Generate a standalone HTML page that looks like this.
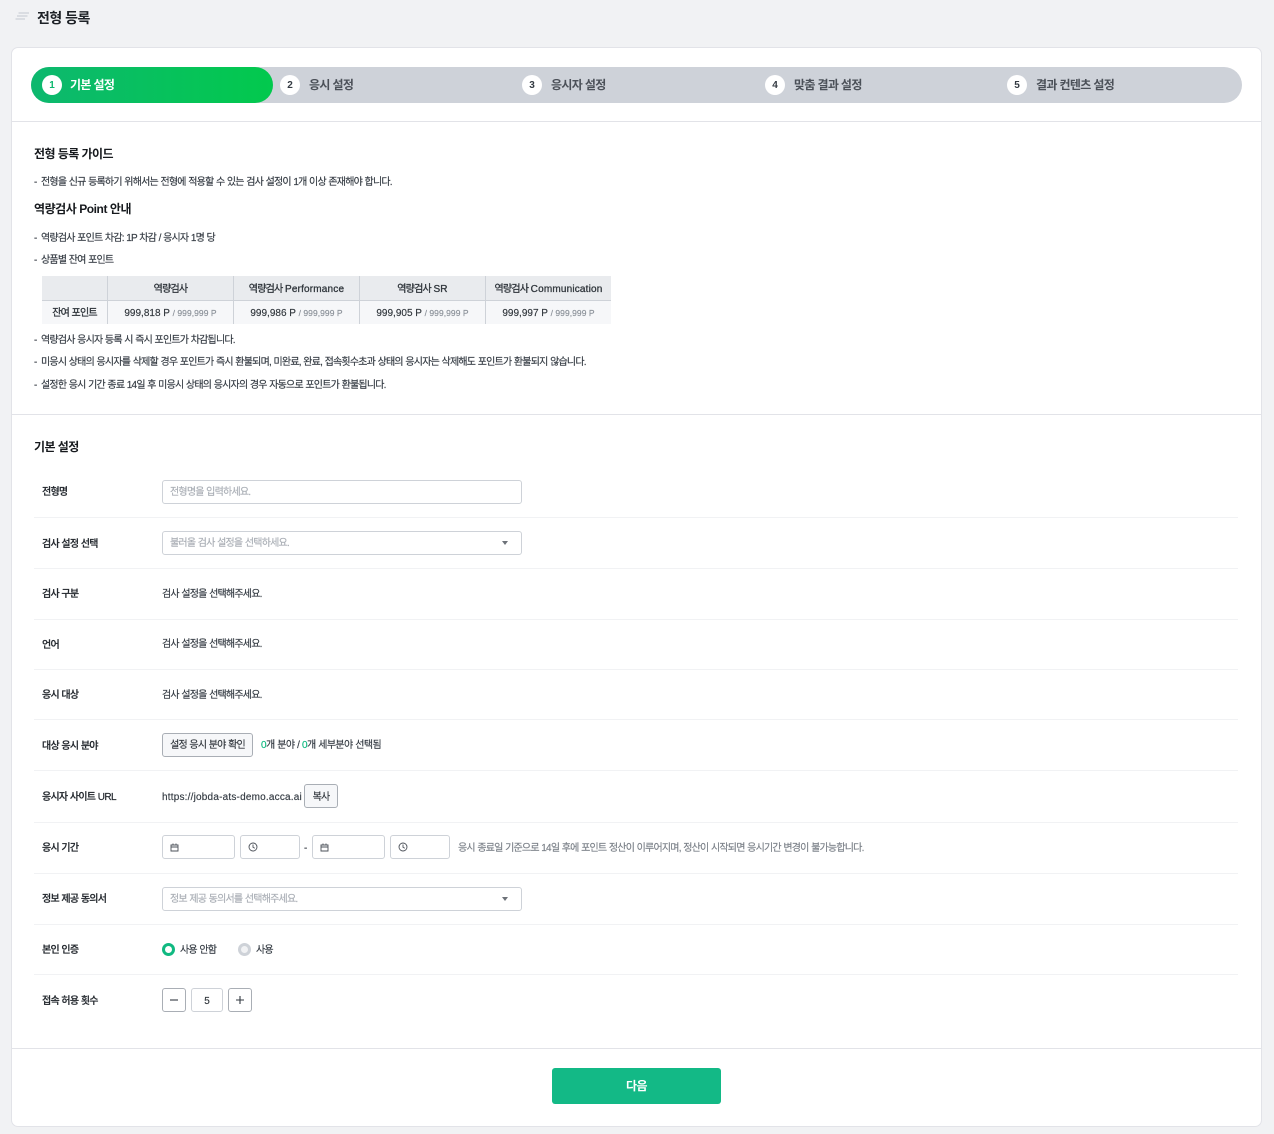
<!DOCTYPE html>
<html lang="ko"><head><meta charset="utf-8"><title>전형 등록</title>
<style>
*{box-sizing:border-box}
html,body{margin:0;padding:0}
body{width:1274px;height:1134px;background:#f1f2f4;position:relative;overflow:hidden;font-family:"Liberation Sans","Noto Sans CJK KR",sans-serif;color:#333a42}
.t{position:absolute;white-space:nowrap;font-size:10px;line-height:14px;letter-spacing:-.78px;word-spacing:.5px;margin-top:1px;-webkit-text-stroke:.15px currentColor}
.b{font-weight:700}
.bx{position:absolute;background:#fff;border:1px solid #ced2d8;border-radius:3px}
.ln{position:absolute;height:1px;left:34px;width:1204px;background:#f1f2f4}
.hl{position:absolute;height:1px;left:12px;width:1249px;background:#e2e3e8}
.num{position:absolute;top:75px;width:20px;height:20px;border-radius:50%;background:#fff;text-align:center;font-size:10px;font-weight:700;line-height:21px;color:#333a42}
.st{position:absolute;top:77px;font-size:12px;font-weight:700;line-height:16px;color:#4b5058;white-space:nowrap;letter-spacing:-.65px}
.h{position:absolute;white-space:nowrap;font-size:12px;line-height:16px;font-weight:700;color:#16191d;letter-spacing:-.55px}
.lb{position:absolute;left:42px;white-space:nowrap;font-size:10px;line-height:14px;font-weight:500;color:#23282e;letter-spacing:-.75px;word-spacing:.5px;margin-top:1px;-webkit-text-stroke:.2px currentColor}
.ph{color:#a9aeb5}
.arr{position:absolute;width:0;height:0;border-left:3.5px solid transparent;border-right:3.5px solid transparent;border-top:4px solid #6d7279}
.cell{position:absolute;text-align:center;white-space:nowrap;font-size:10px;line-height:14px;color:#2f353b;margin-top:1px;-webkit-text-stroke:.15px currentColor}
.k{letter-spacing:-.78px;word-spacing:.5px}
.cb{-webkit-text-stroke:.3px currentColor;letter-spacing:.18px}
.g{color:#8a9098;font-size:8.5px;letter-spacing:.05px}
svg{position:absolute;display:block}
</style></head><body>

<svg style="left:15px;top:10px" width="15" height="12" viewBox="0 0 15 12"><path d="M3.500 3H14M2 6H12.500M.5 9H10" stroke="#d3d6db" stroke-width="1.500" fill="none"/></svg>
<div class="t b" style="left:37px;top:8px;font-size:14px;line-height:18px;color:#1d2126;letter-spacing:-.5px;word-spacing:0;-webkit-text-stroke:0">전형 등록</div>

<div style="position:absolute;left:11px;top:47px;width:1251px;height:1080px;background:#fff;border:1px solid #e2e3e8;border-radius:7px"></div>

<div style="position:absolute;left:31px;top:67px;width:1211px;height:36px;border-radius:18px;background:#ced2d9"></div>
<div style="position:absolute;left:31px;top:67px;width:242px;height:36px;border-radius:18px;background:linear-gradient(90deg,#0db86f,#02c94d)"></div>
<div class="num" style="left:42px;color:#0db86f">1</div><div class="st" style="left:70px;color:#fff">기본 설정</div>
<div class="num" style="left:280px">2</div><div class="st" style="left:309px">응시 설정</div>
<div class="num" style="left:522px">3</div><div class="st" style="left:551px">응시자 설정</div>
<div class="num" style="left:765px">4</div><div class="st" style="left:794px">맞춤 결과 설정</div>
<div class="num" style="left:1007px">5</div><div class="st" style="left:1036px">결과 컨텐츠 설정</div>
<div class="hl" style="top:121px"></div>

<div class="h" style="left:34px;top:146px">전형 등록 가이드</div>
<div class="t" style="left:34px;top:175px">-</div><div class="t" style="left:41px;top:175px">전형을 신규 등록하기 위해서는 전형에 적용할 수 있는 검사 설정이 1개 이상 존재해야 합니다.</div>
<div class="h" style="left:34px;top:201px;letter-spacing:-.45px">역량검사 Point 안내</div>
<div class="t" style="left:34px;top:231px">-</div><div class="t" style="left:41px;top:231px">역량검사 포인트 차감: 1P 차감 / 응시자 1명 당</div>
<div class="t" style="left:34px;top:253px">-</div><div class="t" style="left:41px;top:253px">상품별 잔여 포인트</div>

<div style="position:absolute;left:42px;top:276px;width:569px;height:48px;background:#f6f7f9"></div>
<div style="position:absolute;left:42px;top:276px;width:569px;height:24px;background:#e9ebee"></div>
<div style="position:absolute;left:42px;top:300px;width:569px;height:1px;background:#ced2d8"></div>
<div style="position:absolute;left:107px;top:276px;width:1px;height:48px;background:#ced2d8"></div>
<div style="position:absolute;left:233px;top:276px;width:1px;height:48px;background:#ced2d8"></div>
<div style="position:absolute;left:359px;top:276px;width:1px;height:48px;background:#ced2d8"></div>
<div style="position:absolute;left:485px;top:276px;width:1px;height:48px;background:#ced2d8"></div>
<div class="cell cb" style="left:108px;width:125px;top:282px"><span class="k">역량검사</span></div>
<div class="cell cb" style="left:234px;width:125px;top:282px"><span class="k">역량검사 </span>Performance</div>
<div class="cell cb" style="left:360px;width:125px;top:282px"><span class="k">역량검사 </span>SR</div>
<div class="cell cb" style="left:486px;width:125px;top:282px"><span class="k">역량검사 </span>Communication</div>
<div class="cell cb" style="left:42px;width:65px;top:306px"><span class="k">잔여 포인트</span></div>
<div class="cell" style="left:108px;width:125px;top:305px">999,818 P <span class="g">/ 999,999 P</span></div>
<div class="cell" style="left:234px;width:125px;top:305px">999,986 P <span class="g">/ 999,999 P</span></div>
<div class="cell" style="left:360px;width:125px;top:305px">999,905 P <span class="g">/ 999,999 P</span></div>
<div class="cell" style="left:486px;width:125px;top:305px">999,997 P <span class="g">/ 999,999 P</span></div>

<div class="t" style="left:34px;top:333px">-</div><div class="t" style="left:41px;top:333px">역량검사 응시자 등록 시 즉시 포인트가 차감됩니다.</div>
<div class="t" style="left:34px;top:355px">-</div><div class="t" style="left:41px;top:355px">미응시 상태의 응시자를 삭제할 경우 포인트가 즉시 환불되며, 미완료, 완료, 접속횟수초과 상태의 응시자는 삭제해도 포인트가 환불되지 않습니다.</div>
<div class="t" style="left:34px;top:378px">-</div><div class="t" style="left:41px;top:378px">설정한 응시 기간 종료 14일 후 미응시 상태의 응시자의 경우 자동으로 포인트가 환불됩니다.</div>
<div class="hl" style="top:414px"></div>

<div class="h" style="left:34px;top:439px">기본 설정</div>

<div class="lb" style="top:485px">전형명</div>
<div class="bx" style="left:162px;top:480px;width:360px;height:24px"></div>
<div class="t ph" style="left:170px;top:485px">전형명을 입력하세요.</div>
<div class="ln" style="top:517px"></div>

<div class="lb" style="top:537px">검사 설정 선택</div>
<div class="bx" style="left:162px;top:531px;width:360px;height:24px"></div>
<div class="t ph" style="left:170px;top:536px">불러올 검사 설정을 선택하세요.</div>
<div class="arr" style="left:502px;top:541px"></div>
<div class="ln" style="top:568px"></div>

<div class="lb" style="top:587px">검사 구분</div>
<div class="t" style="left:162px;top:587px">검사 설정을 선택해주세요.</div>
<div class="ln" style="top:619px"></div>

<div class="lb" style="top:638px">언어</div>
<div class="t" style="left:162px;top:637px">검사 설정을 선택해주세요.</div>
<div class="ln" style="top:669px"></div>

<div class="lb" style="top:688px">응시 대상</div>
<div class="t" style="left:162px;top:688px">검사 설정을 선택해주세요.</div>
<div class="ln" style="top:719px"></div>

<div class="lb" style="top:739px">대상 응시 분야</div>
<div class="bx" style="left:162px;top:733px;width:91px;height:24px;background:#f6f7f9;border-color:#a9aeb5"></div>
<div class="cell k" style="left:162px;width:91px;top:738px">설정 응시 분야 확인</div>
<div class="t" style="left:261px;top:738px;letter-spacing:-.6px"><span style="color:#10b981">0</span>개 분야 / <span style="color:#10b981">0</span>개 세부분야 선택됨</div>
<div class="ln" style="top:770px"></div>

<div class="lb" style="top:790px">응시자 사이트 <span style="letter-spacing:-.6px">URL</span></div>
<div class="t" style="left:162px;top:790px;letter-spacing:.2px">https://jobda-ats-demo.acca.ai</div>
<div class="bx" style="left:304px;top:784px;width:34px;height:24px;background:#f6f7f9;border-color:#a9aeb5"></div>
<div class="cell k" style="left:304px;width:34px;top:790px">복사</div>
<div class="ln" style="top:822px"></div>

<div class="lb" style="top:841px">응시 기간</div>
<div class="bx" style="left:162px;top:835px;width:73px;height:24px"></div>
<svg style="left:170px;top:843px" width="9" height="9" viewBox="0 0 9 9"><path d="M1 2H8V8H1ZM1 4H8M3 .5V2M6 .5V2" fill="none" stroke="#4b5058" stroke-width=".9"/></svg>
<div class="bx" style="left:240px;top:835px;width:60px;height:24px"></div>
<svg style="left:248px;top:842px" width="10" height="10" viewBox="0 0 10 10"><circle cx="5" cy="5" r="4" fill="none" stroke="#4b5058" stroke-width=".9"/><path d="M5 2.500V5.200L6.800 6.300" fill="none" stroke="#4b5058" stroke-width=".9"/></svg>
<div class="t" style="left:304px;top:841px">-</div>
<div class="bx" style="left:312px;top:835px;width:73px;height:24px"></div>
<svg style="left:320px;top:843px" width="9" height="9" viewBox="0 0 9 9"><path d="M1 2H8V8H1ZM1 4H8M3 .5V2M6 .5V2" fill="none" stroke="#4b5058" stroke-width=".9"/></svg>
<div class="bx" style="left:390px;top:835px;width:60px;height:24px"></div>
<svg style="left:398px;top:842px" width="10" height="10" viewBox="0 0 10 10"><circle cx="5" cy="5" r="4" fill="none" stroke="#4b5058" stroke-width=".9"/><path d="M5 2.500V5.200L6.800 6.300" fill="none" stroke="#4b5058" stroke-width=".9"/></svg>
<div class="t" style="left:458px;top:841px;color:#7b8088">응시 종료일 기준으로 14일 후에 포인트 정산이 이루어지며, 정산이 시작되면 응시기간 변경이 불가능합니다.</div>
<div class="ln" style="top:873px"></div>

<div class="lb" style="top:892px">정보 제공 동의서</div>
<div class="bx" style="left:162px;top:887px;width:360px;height:24px"></div>
<div class="t ph" style="left:170px;top:892px">정보 제공 동의서를 선택해주세요.</div>
<div class="arr" style="left:502px;top:897px"></div>
<div class="ln" style="top:924px"></div>

<div class="lb" style="top:943px">본인 인증</div>
<div style="position:absolute;left:162px;top:943px;width:13px;height:13px;border-radius:50%;border:3.5px solid #10b981;background:#fff"></div>
<div class="t" style="left:180px;top:943px">사용 안함</div>
<div style="position:absolute;left:238px;top:943px;width:13px;height:13px;border-radius:50%;border:3.5px solid #ced2d8;background:#f1f2f4"></div>
<div class="t" style="left:256px;top:943px">사용</div>
<div class="ln" style="top:974px"></div>

<div class="lb" style="top:994px">접속 허용 횟수</div>
<div class="bx" style="left:162px;top:988px;width:24px;height:24px;border-color:#a9aeb5"></div>
<svg style="left:169px;top:995px" width="10" height="10" viewBox="0 0 10 10"><path d="M1 5H9" stroke="#333a42" stroke-width="1.100"/></svg>
<div class="bx" style="left:191px;top:988px;width:32px;height:24px"></div>
<div class="cell" style="left:191px;width:32px;top:994px">5</div>
<div class="bx" style="left:228px;top:988px;width:24px;height:24px;border-color:#a9aeb5"></div>
<svg style="left:235px;top:995px" width="10" height="10" viewBox="0 0 10 10"><path d="M1 5H9M5 1V9" stroke="#333a42" stroke-width="1.100"/></svg>

<div class="hl" style="top:1048px"></div>
<div style="position:absolute;left:552px;top:1068px;width:169px;height:36px;border-radius:3px;background:#13b986;color:#fff;font-size:12px;font-weight:700;text-align:center;line-height:37px;letter-spacing:-.5px">다음</div>
</body></html>
